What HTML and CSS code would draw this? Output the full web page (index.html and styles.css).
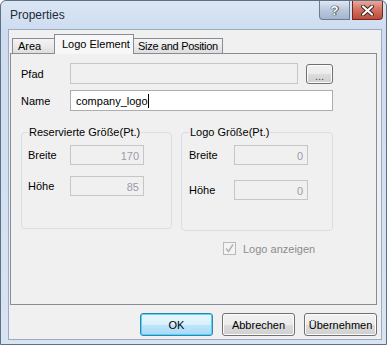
FILE: index.html
```html
<!DOCTYPE html>
<html lang="de">
<head>
    <meta charset="UTF-8">
    <title>Properties</title>
    <link rel="stylesheet" href="styles.css">
</head>
<body>
<div class="window">
    <div class="titlebar">
        <span class="title">Properties</span>
        <div class="caption-buttons">
            <span class="cap-btn help">?</span>
            <span class="cap-btn close">
                <svg width="13" height="11" viewBox="0 0 13 11">
                    <path d="M2 1.5 L11 9.5 M11 1.5 L2 9.5" stroke="#3b2020" stroke-width="4" stroke-linecap="round"/>
                    <path d="M2 1.5 L11 9.5 M11 1.5 L2 9.5" stroke="#fff" stroke-width="2.2" stroke-linecap="round"/>
                </svg>
            </span>
        </div>
    </div>
    <div class="client">
        <div class="tabs">
            <div class="tab tab-area">Area</div>
            <div class="tab tab-active">Logo Element</div>
            <div class="tab tab-size">Size and Position</div>
        </div>
        <div class="panel">
            <div class="row row-pfad">
                <span class="label">Pfad</span>
                <input type="text" class="field field-pfad" disabled>
                <button class="btn btn-browse">...</button>
            </div>
            <div class="row row-name">
                <span class="label">Name</span>
                <div class="field field-name">company_logo<span class="caret"></span></div>
            </div>
            <div class="groups">
                <fieldset class="group group-left">
                    <legend>Reservierte Größe(Pt.)</legend>
                    <div class="grow">
                        <span class="glabel">Breite</span>
                        <div class="field field-num">170</div>
                    </div>
                    <div class="grow grow-second">
                        <span class="glabel">Höhe</span>
                        <div class="field field-num">85</div>
                    </div>
                </fieldset>
                <fieldset class="group group-right">
                    <legend>Logo Größe(Pt.)</legend>
                    <div class="grow">
                        <span class="glabel">Breite</span>
                        <div class="field field-num">0</div>
                    </div>
                    <div class="grow grow-second">
                        <span class="glabel">Höhe</span>
                        <div class="field field-num">0</div>
                    </div>
                </fieldset>
            </div>
            <div class="check-row">
                <span class="checkbox">
                    <svg width="9" height="9" viewBox="0 0 9 9">
                        <path d="M1 4.5 L3.5 7.5 L8 0.5" fill="none" stroke="#b4b4b4" stroke-width="1.6"/>
                    </svg>
                </span>
                <span class="check-label">Logo anzeigen</span>
            </div>
        </div>
        <div class="buttons">
            <button class="btn btn-ok">OK</button>
            <button class="btn">Abbrechen</button>
            <button class="btn">Übernehmen</button>
        </div>
    </div>
</div>
</body>
</html>
```

FILE: styles.css
```css
* {
    box-sizing: border-box;
}
body {
    margin: 0;
    background: #ffffff;
    font-family: "Liberation Sans", Arial, sans-serif;
    font-size: 11px;
    color: #000;
}
.window {
    width: 387px;
    height: 345px;
    display: flex;
    flex-direction: column;
    background: linear-gradient(#dbe6f4, #cddcf0 30px, #d9e4f2);
    border: 1px solid #5f6f84;
    border-radius: 6px 6px 0 0;
}

/* title bar */
.titlebar {
    height: 28px;
    display: flex;
    align-items: flex-start;
    justify-content: space-between;
}
.title {
    margin: 7px 0 0 9px;
    font-size: 12px;
    color: #1e2a3a;
}
.caption-buttons {
    display: flex;
    gap: 2px;
    margin-right: 3px;
}
.cap-btn {
    height: 19px;
    width: 31px;
    display: flex;
    align-items: center;
    justify-content: center;
    border: 1px solid #6d7b8f;
    border-top: none;
    border-radius: 0 0 4px 4px;
}
.help {
    background: linear-gradient(#dfe8f3, #b9c8dc 50%, #a3b6d0);
    color: #fff;
    font-weight: bold;
    font-size: 13px;
    text-shadow: 0 0 1px #2d3a4e, 0 0 1px #2d3a4e, 1px 0 1px #2d3a4e;
    border-radius: 0 0 0 4px;
}
.close {
    background: linear-gradient(#e9a99c, #d0705f 50%, #c04a3a);
    border-color: #6e2a22;
    border-radius: 0 0 4px 0;
}

/* client area */
.client {
    flex: 1;
    display: flex;
    flex-direction: column;
    background: #f0f0f0;
    margin: 0 4px 4px 7px;
    border: 1px solid #9aabc2;
    padding: 2px 4px 3px 1px;
}
.tabs {
    display: flex;
    align-items: flex-end;
    height: 21px;
    padding-left: 2px;
    position: relative;
    z-index: 1;
}
.tab {
    height: 15px;
    border: 1px solid #898c95;
    border-bottom: none;
    background: linear-gradient(#f3f3f3, #ebebeb 50%, #dddddd);
    padding: 1px 0 0 5px;
    line-height: 13px;
    white-space: nowrap;
}
.tab-area {
    width: 42px;
    border-right: none;
}
.tab-active {
    width: 80px;
    height: 20px;
    margin-bottom: -1px;
    background: #f7f7f7;
    padding: 3px 0 0 7px;
}
.tab-size {
    width: 89px;
    border-left: none;
    padding-left: 4px;
    letter-spacing: -0.3px;
}
.panel {
    flex: 1;
    border: 1px solid #898c95;
    padding: 9px 0 0 10px;
}
.row {
    display: flex;
    align-items: center;
    height: 21px;
}
.row-name {
    margin-top: 6px;
}
.label {
    width: 49px;
}
.field {
    height: 21px;
    border: 1px solid #c6c6c6;
    background: #f0f0f0;
}
.field-pfad {
    width: 228px;
}
.btn {
    font-family: "Liberation Sans", Arial, sans-serif;
    font-size: 11px;
    color: #000;
    border: 1px solid #707070;
    border-radius: 3px;
    background: linear-gradient(#f2f2f2, #ebebeb 50%, #dddddd 51%, #cfcfcf);
    box-shadow: inset 0 0 0 1px #fcfcfc;
    padding: 0;
}
.btn-browse {
    width: 27px;
    height: 20px;
    margin-left: 8px;
    margin-top: 1px;
    color: #4a4a4a;
    padding-top: 4px;
}
.field-name {
    width: 263px;
    background: #fff;
    border-color: #abadb3;
    padding: 3px 0 0 5px;
    line-height: 14px;
}
.caret {
    display: inline-block;
    width: 1px;
    height: 14px;
    background: #000;
    vertical-align: top;
}

/* group boxes */
.groups {
    display: flex;
    gap: 9px;
    margin-top: 15px;
    align-items: flex-start;
}
.group {
    margin: 0;
    border: 1px solid #d5dfe5;
    border-radius: 4px;
    padding: 6px 0 0 6px;
    width: 151px;
    height: 103px;
}
.group-right {
    width: 152px;
    height: 105px;
    padding-left: 7px;
}
.group legend {
    padding: 0 1px;
    margin-left: 0;
    line-height: 13px;
}
.grow {
    display: flex;
    align-items: center;
    height: 20px;
}
.grow-second {
    margin-top: 11px;
}
.group-right .grow-second {
    margin-top: 15px;
}
.glabel {
    width: 42px;
}
.group-right .glabel {
    width: 45px;
}
.field-num {
    width: 74px;
    height: 20px;
    text-align: right;
    padding: 3px 4px 0 0;
    color: #9d9aa8;
    line-height: 14px;
}

/* checkbox */
.check-row {
    display: flex;
    align-items: center;
    margin: 11px 0 0 202px;
}
.checkbox {
    width: 13px;
    height: 13px;
    border: 1px solid #b9b9b9;
    background: #f4f4f4;
    display: flex;
    align-items: center;
    justify-content: center;
}
.check-label {
    margin-left: 7px;
    color: #8d8d8d;
}

/* bottom buttons */
.buttons {
    display: flex;
    justify-content: flex-end;
    gap: 9px;
    margin-top: 8px;
    height: 23px;
}
.buttons .btn {
    width: 73px;
    height: 23px;
}
.btn-ok {
    border-color: #3c7fb1;
    background: linear-gradient(#eaf6fd, #d9f0fc 50%, #bee6fd 51%, #a7d9f5);
    box-shadow: inset 0 0 0 1px #48d8fb;
}
```
